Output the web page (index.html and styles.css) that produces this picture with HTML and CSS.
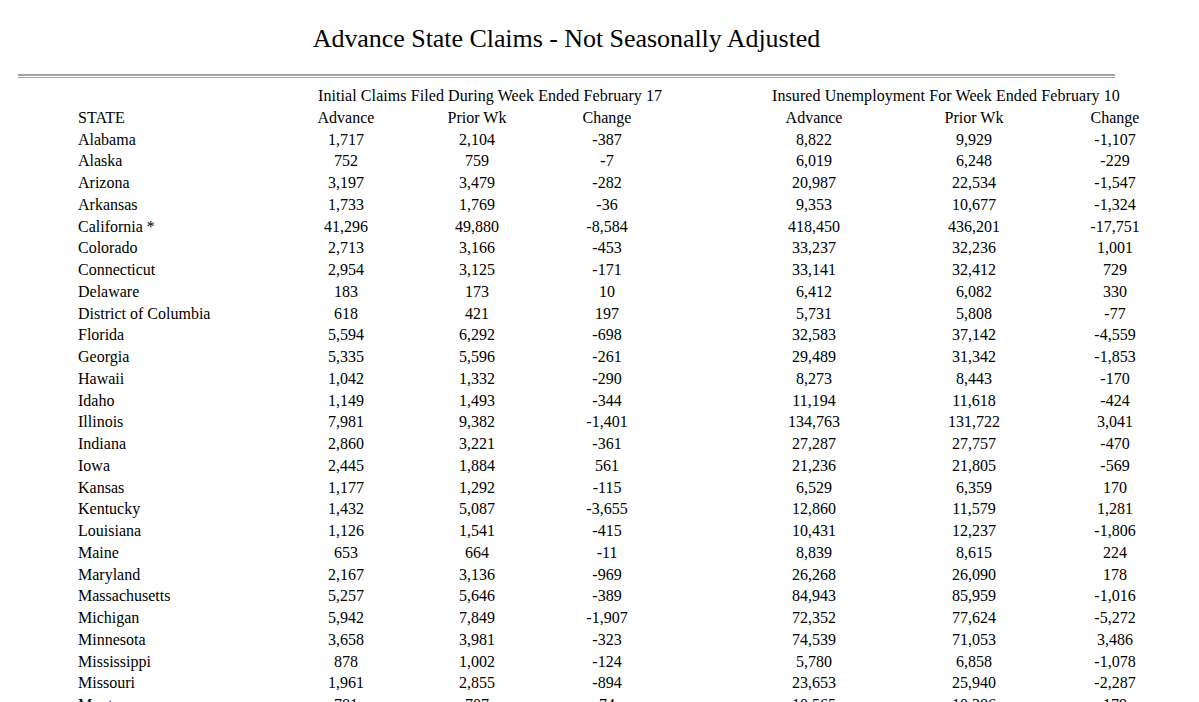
FILE: index.html
```html
<!DOCTYPE html>
<html>
<head>
    <title>Advance State Claims - Not Seasonally Adjusted</title>
    <link rel="stylesheet" href="styles.css">
</head>
<body>
    <div class="reporte">
        <h1 class="titulo">Advance State Claims - Not Seasonally Adjusted</h1>
        <div class="regla"></div>

        <table class="tabla-claims">
            <colgroup>
                <col class="col-estado">
                <col class="col-a">
                <col class="col-b">
                <col class="col-c">
                <col class="col-espacio">
                <col class="col-d">
                <col class="col-e">
                <col class="col-f">
            </colgroup>
            <thead>
                <tr>
                    <th></th>
                    <th colspan="3" class="grupo grupo-inicial">Initial Claims Filed During Week Ended February 17</th>
                    <th></th>
                    <th colspan="3" class="grupo grupo-asegurado">Insured Unemployment For Week Ended February 10</th>
                </tr>
                <tr>
                    <th class="estado">STATE</th>
                    <th>Advance</th>
                    <th>Prior Wk</th>
                    <th>Change</th>
                    <th></th>
                    <th>Advance</th>
                    <th>Prior Wk</th>
                    <th>Change</th>
                </tr>
            </thead>
            <tbody id="filas"></tbody>
        </table>
    </div>

    <script>
        var datos = [
            ['Alabama', '1,717', '2,104', '-387', '8,822', '9,929', '-1,107'],
            ['Alaska', '752', '759', '-7', '6,019', '6,248', '-229'],
            ['Arizona', '3,197', '3,479', '-282', '20,987', '22,534', '-1,547'],
            ['Arkansas', '1,733', '1,769', '-36', '9,353', '10,677', '-1,324'],
            ['California *', '41,296', '49,880', '-8,584', '418,450', '436,201', '-17,751'],
            ['Colorado', '2,713', '3,166', '-453', '33,237', '32,236', '1,001'],
            ['Connecticut', '2,954', '3,125', '-171', '33,141', '32,412', '729'],
            ['Delaware', '183', '173', '10', '6,412', '6,082', '330'],
            ['District of Columbia', '618', '421', '197', '5,731', '5,808', '-77'],
            ['Florida', '5,594', '6,292', '-698', '32,583', '37,142', '-4,559'],
            ['Georgia', '5,335', '5,596', '-261', '29,489', '31,342', '-1,853'],
            ['Hawaii', '1,042', '1,332', '-290', '8,273', '8,443', '-170'],
            ['Idaho', '1,149', '1,493', '-344', '11,194', '11,618', '-424'],
            ['Illinois', '7,981', '9,382', '-1,401', '134,763', '131,722', '3,041'],
            ['Indiana', '2,860', '3,221', '-361', '27,287', '27,757', '-470'],
            ['Iowa', '2,445', '1,884', '561', '21,236', '21,805', '-569'],
            ['Kansas', '1,177', '1,292', '-115', '6,529', '6,359', '170'],
            ['Kentucky', '1,432', '5,087', '-3,655', '12,860', '11,579', '1,281'],
            ['Louisiana', '1,126', '1,541', '-415', '10,431', '12,237', '-1,806'],
            ['Maine', '653', '664', '-11', '8,839', '8,615', '224'],
            ['Maryland', '2,167', '3,136', '-969', '26,268', '26,090', '178'],
            ['Massachusetts', '5,257', '5,646', '-389', '84,943', '85,959', '-1,016'],
            ['Michigan', '5,942', '7,849', '-1,907', '72,352', '77,624', '-5,272'],
            ['Minnesota', '3,658', '3,981', '-323', '74,539', '71,053', '3,486'],
            ['Mississippi', '878', '1,002', '-124', '5,780', '6,858', '-1,078'],
            ['Missouri', '1,961', '2,855', '-894', '23,653', '25,940', '-2,287'],
            ['Montana', '781', '707', '74', '10,565', '10,386', '179']
        ];

        var cuerpo = document.getElementById('filas');

        datos.forEach(function(fila) {
            var tr = document.createElement('tr');
            fila.forEach(function(valor, i) {
                if (i === 4) {
                    tr.appendChild(document.createElement('td'));
                }
                var td = document.createElement('td');
                td.textContent = valor;
                if (i === 0) {
                    td.classList.add('estado');
                }
                tr.appendChild(td);
            });
            cuerpo.appendChild(tr);
        });
    </script>
</body>
</html>
```

FILE: styles.css
```css
body {
    margin: 0;
    background-color: #ffffff;
    color: #000000;
    font-family: "Liberation Serif", "Times New Roman", serif;
}

.reporte {
    width: 1097px;
    margin-left: 18px;
    padding-top: 24px;
}

.titulo {
    margin: 0;
    font-size: 26px;
    font-weight: normal;
    line-height: 30px;
    letter-spacing: -0.05px;
    text-align: center;
}

.regla {
    margin-top: 20px;
    height: 1px;
    border-top: 2px solid #a3a3a3;
    border-bottom: 1px solid #a3a3a3;
}

.tabla-claims {
    margin-top: 7px;
    margin-left: 60px;
    border-collapse: collapse;
    table-layout: fixed;
    width: 1078px;
    font-size: 16px;
}

.tabla-claims th,
.tabla-claims td {
    padding: 0;
    font-weight: normal;
    line-height: 21.75px;
    text-align: center;
    white-space: nowrap;
}

.tabla-claims .estado {
    text-align: left;
}

.tabla-claims .grupo {
    text-align: left;
    letter-spacing: 0.08px;
}

.grupo-inicial {
    padding-left: 32px !important;
}

.grupo-asegurado {
    padding-left: 18px !important;
}

.col-estado { width: 208px; }
.col-a { width: 120px; }
.col-b { width: 142px; }
.col-c { width: 118px; }
.col-espacio { width: 88px; }
.col-d { width: 120px; }
.col-e { width: 200px; }
.col-f { width: 82px; }
```
